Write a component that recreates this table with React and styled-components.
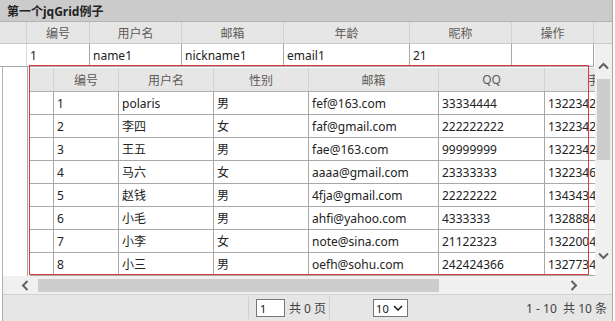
import React from "react";
import styled, { createGlobalStyle } from "styled-components";

const Global = createGlobalStyle`
  html, body { margin: 0; padding: 0; background: #fff; }
  body { font-family: "Noto Sans", "Noto Sans CJK SC", sans-serif; font-size: 12px; color: #222; }
  * { box-sizing: border-box; }
`;

const Grid = styled.div`
  position: relative;
  width: 613px;
  border-right: 1px solid #a9a9a9;
`;

const TitleBar = styled.div`
  height: 22px;
  background: #cbcbcb;
  border-bottom: 1px solid #b4b4b4;
  padding-left: 7px;
  display: flex;
  align-items: center;
  font-weight: bold;
  font-size: 12px;
  color: #222;
`;

const HeaderRow = styled.div`
  display: grid;
  grid-template-columns: ${(p) => p.$cols};
  height: ${(p) => p.$h || 22}px;
  background: #e6e6e6;
  border-bottom: 1px solid ${(p) => p.$line || "#c9c9c9"};
`;

const HeadCell = styled.div`
  display: flex;
  align-items: center;
  justify-content: center;
  border-right: 1px solid #d2d2d2;
  color: #5e5a56;
  white-space: nowrap;
  overflow: hidden;
`;

const Filler = styled.div``;

const Body = styled.div`
  display: flex;
  height: 232px;
`;

const BodyMain = styled.div`
  width: 595px;
  overflow: hidden;
  display: flex;
  flex-direction: column;
`;

const DataRow = styled.div`
  display: grid;
  grid-template-columns: ${(p) => p.$cols};
  width: max-content;
  height: 23px;
  background: #fff;
  border-bottom: 1px solid ${(p) => p.$line || "#a8a8a8"};
  flex-shrink: 0;
`;

const Cell = styled.div`
  display: flex;
  align-items: center;
  padding-left: 3px;
  border-right: 1px solid ${(p) => p.$line || "#a8a8a8"};
  white-space: nowrap;
  overflow: hidden;
  color: #222;
`;

const SubRow = styled.div`
  display: flex;
  flex: 1;
  min-height: 0;
`;

const Gutter = styled.div`
  margin-left: 2px;
  width: 26px;
  flex-shrink: 0;
  border-left: 1px solid #b0b0b0;
  border-right: 1px solid #a8a8a8;
  background: #fff;
`;

const SubArea = styled.div`
  flex: 1;
  padding: 1px 0 0 2px;
  overflow: hidden;
  background: #fff;
`;

const SubTable = styled.div`
  display: flex;
  flex-direction: column;
  width: max-content;
`;

const VScroll = styled.div`
  width: 17px;
  background: #f0f0f0;
  display: flex;
  flex-direction: column;
  align-items: center;
`;

const Thumb = styled.div`
  background: #cdcdcd;
  ${(p) =>
    p.$vertical
      ? `width: 13px; height: 81px; margin-top: 9px;`
      : `height: 13px; width: 401px; margin-left: 9px;`}
`;

const Spacer = styled.div`
  flex: 1;
`;

const HScrollRow = styled.div`
  display: flex;
  height: 18px;
`;

const HScroll = styled.div`
  width: 595px;
  margin-left: 2px;
  border-left: 1px solid #b0b0b0;
  background: #f0f0f0;
  display: flex;
  align-items: center;
  padding-left: 18px;
`;

const Corner = styled.div`
  flex: 1;
  background: #f0f0f0;
`;

const Chevron = styled.svg`
  display: block;
  flex-shrink: 0;
`;

const Pager = styled.div`
  margin-left: 2px;
  height: 27px;
  border-left: 1px solid #b0b0b0;
  border-top: 1px solid #d0d0d0;
  background: #e6e6e6;
  display: flex;
  align-items: center;
  color: #444;
`;

const Sep = styled.div`
  width: 1px;
  height: 22px;
  background: #cfcfcf;
  margin-left: ${(p) => p.$ml || 0}px;
`;

const PageInput = styled.div`
  width: 29px;
  height: 18px;
  margin-left: 7px;
  border: 1px solid #767676;
  background: #fff;
  font-size: 11px;
  display: flex;
  align-items: center;
  padding-left: 3px;
  color: #111;
`;

const PagerText = styled.span`
  margin-left: ${(p) => p.$ml || 0}px;
  white-space: pre;
`;

const Select = styled.div`
  width: 35px;
  height: 18px;
  margin-left: 43px;
  border: 1px solid #767676;
  background: #fff;
  font-size: 11px;
  display: flex;
  align-items: center;
  justify-content: space-between;
  padding: 0 4px 0 2px;
  color: #111;
`;

const RightInfo = styled.span`
  margin-left: auto;
  margin-right: 5px;
  white-space: pre;
  color: #444;
`;

const RedBox = styled.div`
  position: absolute;
  left: 29px;
  top: 65px;
  width: 560px;
  height: 210px;
  border: 1px solid #e23a3a;
  pointer-events: none;
`;

const Up = () => (
  <Chevron width="11" height="8" viewBox="0 0 11 8" style={{ marginTop: 18 }}>
    <polyline points="1,6.5 5.5,2 10,6.5" fill="none" stroke="#606060" strokeWidth="2" />
  </Chevron>
);
const Down = () => (
  <Chevron width="11" height="8" viewBox="0 0 11 8" style={{ marginBottom: 16 }}>
    <polyline points="1,1.5 5.5,6 10,1.5" fill="none" stroke="#606060" strokeWidth="2" />
  </Chevron>
);
const Left = () => (
  <Chevron width="8" height="11" viewBox="0 0 8 11">
    <polyline points="6.5,1 2,5.5 6.5,10" fill="none" stroke="#606060" strokeWidth="2" />
  </Chevron>
);
const Right = () => (
  <Chevron width="8" height="11" viewBox="0 0 8 11" style={{ marginLeft: 131 }}>
    <polyline points="1.5,1 6,5.5 1.5,10" fill="none" stroke="#606060" strokeWidth="2" />
  </Chevron>
);

const outerCols = "27px 63px 92px 102px 126px 102px 82px";
const subCols = "24px 65px 95px 95px 130px 106px 110px";

const outerHead = ["", "编号", "用户名", "邮箱", "年龄", "昵称", "操作"];
const outerRow = ["", "1", "name1", "nickname1", "email1", "21", ""];

const subHead = ["", "编号", "用户名", "性别", "邮箱", "QQ", "手机"];
const subRows = [
  ["1", "polaris", "男", "fef@163.com", "33334444", "13223423333"],
  ["2", "李四", "女", "faf@gmail.com", "222222222", "13223423232"],
  ["3", "王五", "男", "fae@163.com", "99999999", "13223423456"],
  ["4", "马六", "女", "aaaa@gmail.com", "23333333", "13223465656"],
  ["5", "赵钱", "男", "4fja@gmail.com", "22222222", "13434343434"],
  ["6", "小毛", "男", "ahfi@yahoo.com", "4333333", "13288848484"],
  ["7", "小李", "女", "note@sina.com", "21122323", "13220043434"],
  ["8", "小三", "男", "oefh@sohu.com", "242424366", "13277343434"],
  ["9", "小四", "女", "abc@qq.com", "12345678", "13212345678"],
];

export default function App() {
  return (
    <>
      <Global />
      <Grid>
        <TitleBar>第一个jqGrid例子</TitleBar>
        <HeaderRow $cols={`${outerCols} 1fr`}>
          {outerHead.map((h, i) => (
            <HeadCell key={i}>{h}</HeadCell>
          ))}
          <Filler />
        </HeaderRow>
        <Body>
          <BodyMain>
            <DataRow $cols={outerCols} $line="#a8a8a8">
              {outerRow.map((c, i) => (
                <Cell key={i} $line={i === 0 ? "#dcdcdc" : "#a8a8a8"}>{c}</Cell>
              ))}
            </DataRow>
            <SubRow>
              <Gutter />
              <SubArea>
                <SubTable>
                  <HeaderRow $cols={subCols} $h={24} $line="#b0b0b0">
                    {subHead.map((h, i) => (
                      <HeadCell key={i}>{h}</HeadCell>
                    ))}
                  </HeaderRow>
                  {subRows.map((r, ri) => (
                    <DataRow key={ri} $cols={subCols}>
                      <Cell />
                      {r.map((c, i) => (
                        <Cell key={i}>{c}</Cell>
                      ))}
                    </DataRow>
                  ))}
                </SubTable>
              </SubArea>
            </SubRow>
          </BodyMain>
          <VScroll>
            <Up />
            <Thumb $vertical />
            <Spacer />
            <Down />
          </VScroll>
        </Body>
        <HScrollRow>
          <HScroll>
            <Left />
            <Thumb />
            <Right />
          </HScroll>
          <Corner />
        </HScrollRow>
        <Pager>
          <Sep $ml={245} />
          <PageInput>1</PageInput>
          <PagerText $ml={4}>共 0 页</PagerText>
          <Sep $ml={3} />
          <Select>
            <span>10</span>
            <svg width="10" height="6" viewBox="0 0 10 6">
              <polyline points="1,1 5,5 9,1" fill="none" stroke="#222" strokeWidth="1.6" />
            </svg>
          </Select>
          <RightInfo>1 - 10  共 10 条</RightInfo>
        </Pager>
        <RedBox />
      </Grid>
    </>
  );
}
